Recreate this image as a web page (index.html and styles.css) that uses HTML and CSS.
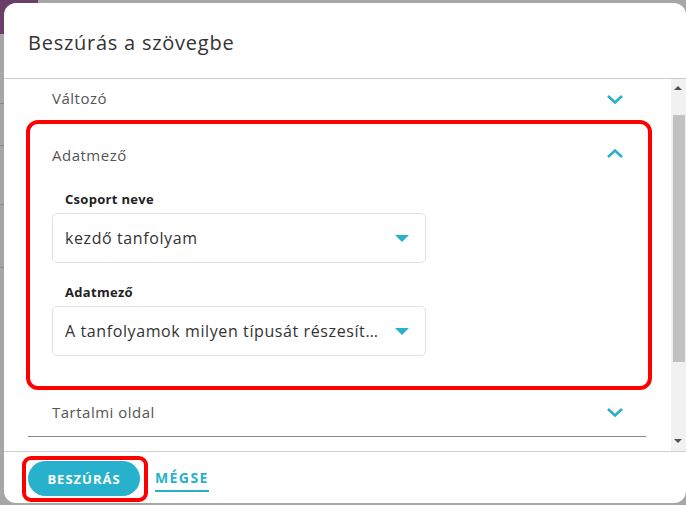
FILE: index.html
```html
<!DOCTYPE html>
<html lang="hu">
<head>
<meta charset="utf-8">
<title>Beszúrás a szövegbe</title>
<link rel="stylesheet" href="styles.css">
</head>
<body>
<div class="backdrop-tab"></div>
<div class="backdrop-lines">
  <span class="bl l1"></span><span class="bl l2"></span><span class="bl l3"></span><span class="bl l4"></span>
</div>
<div class="dialog">
  <div class="dialog-header">Beszúrás a szövegbe</div>
  <div class="dialog-body">
    <div class="scroll-content">
      <div class="acc-item">
        <div class="acc-head first-head">
          <span class="head-text">Változó</span>
          <svg class="chev" width="18" height="11" viewBox="0 0 18 11"><polyline points="2,2 9,8.5 16,2" fill="none" stroke="#2aafcc" stroke-width="2.6"/></svg>
        </div>
      </div>
      <div class="acc-item open highlight">
        <div class="acc-head open-head">
          <span>Adatmező</span>
          <svg class="chev" width="18" height="11" viewBox="0 0 18 11"><polyline points="2,9 9,2.5 16,9" fill="none" stroke="#2aafcc" stroke-width="2.6"/></svg>
        </div>
        <div class="acc-panel">
          <div class="field">
            <div class="field-label">Csoport neve</div>
            <div class="select">
              <span class="select-text">kezdő tanfolyam</span>
              <span class="caret"></span>
            </div>
          </div>
          <div class="field">
            <div class="field-label">Adatmező</div>
            <div class="select">
              <span class="select-text">A tanfolyamok milyen típusát részesítené előnyben?</span>
              <span class="caret"></span>
            </div>
          </div>
        </div>
      </div>
      <div class="acc-item last">
        <div class="acc-head last-head">
          <span>Tartalmi oldal</span>
          <svg class="chev" width="18" height="11" viewBox="0 0 18 11"><polyline points="2,2 9,8.5 16,2" fill="none" stroke="#2aafcc" stroke-width="2.6"/></svg>
        </div>
      </div>
    </div>
    <div class="scrollbar">
      <div class="sb-arrow up"></div>
      <div class="sb-track"><div class="sb-thumb"></div></div>
      <div class="sb-arrow down"></div>
    </div>
  </div>
  <div class="dialog-footer">
    <span class="btn-mark"><button class="btn-primary">Beszúrás</button></span>
    <a class="btn-link">Mégse</a>
  </div>
</div>
</body>
</html>
```

FILE: styles.css
```css
* { box-sizing: border-box; }
html, body { margin: 0; padding: 0; }
body {
  width: 686px;
  height: 505px;
  overflow: hidden;
  background: #a6a6a6;
  font-family: "Open Sans", "Liberation Sans", sans-serif;
  position: relative;
  padding: 3px 0 0 4px;
}
.backdrop-tab {
  position: absolute;
  left: 0; top: 0;
  width: 38px; height: 34px;
  background: #6b3f69;
  border-bottom-right-radius: 10px;
}
.backdrop-lines { position: absolute; left: 0; top: 0; width: 4px; height: 505px; }
.bl { position: absolute; left: 0; width: 4px; height: 1px; background: #8a8a8a; }
.l1 { top: 103px; } .l2 { top: 145px; } .l3 { top: 204px; } .l4 { top: 267px; }
.dialog {
  position: relative;
  width: 682px;
  height: 500px;
  background: #fff;
  border-radius: 12px;
  display: flex;
  flex-direction: column;
  overflow: hidden;
}
.dialog-header {
  height: 76px;
  flex: none;
  border-bottom: 1px solid #cfcbcb;
  padding: 27px 0 0 24px;
  font-size: 20px;
  line-height: 26px;
  color: #333;
  letter-spacing: 0.75px;
}
.dialog-body {
  height: 372px;
  flex: none;
  display: flex;
}
.scroll-content {
  flex: 1;
  min-width: 0;
  padding: 0 25px 0 24px;
}
.acc-head {
  display: flex;
  align-items: center;
  justify-content: space-between;
  font-size: 15px;
  color: #555;
  letter-spacing: 0.5px;
  padding: 0 22px 0 24px;
}
.first-head { height: 41px; }
.first-head .head-text { margin-bottom: 3px; }
.chev { display: block; flex: none; }
.highlight {
  border: 4px solid #fe0000;
  border-radius: 12px;
  margin: 0 -6px 0 -2px;
  padding-bottom: 30px;
}
.open-head { height: 62px; padding: 0 24px 0 22px; }
.open-head .chev { margin-top: -4px; }
.acc-panel { padding: 0 222px 0 22px; }
.field-label {
  font-size: 13px;
  font-weight: 700;
  color: #222;
  letter-spacing: 0.3px;
  height: 16px;
  line-height: 16px;
  margin: 5px 0 6px 13px;
}
.field + .field .field-label { margin-top: 21px; }
.select {
  height: 50px;
  border: 1px solid #e2e2e2;
  border-radius: 5px;
  display: flex;
  align-items: center;
  padding: 0 16px 0 12px;
  gap: 10px;
}
.select-text {
  flex: 1;
  min-width: 0;
  font-size: 16px;
  color: #333;
  letter-spacing: 0.6px;
  white-space: nowrap;
  overflow: hidden;
  text-overflow: ellipsis;
}
.caret {
  flex: none;
  width: 0; height: 0;
  border-left: 7px solid transparent;
  border-right: 7px solid transparent;
  border-top: 7px solid #2aafcc;
}
.last-head {
  height: 47px;
  border-bottom: 1px solid #8c8888;
  padding-bottom: 2px;
}
.scrollbar {
  width: 15px;
  flex: none;
  background: #f1f1f1;
  display: flex;
  flex-direction: column;
}
.sb-arrow { height: 17px; position: relative; }
.sb-arrow.up::after, .sb-arrow.down::after {
  content: "";
  position: absolute;
  left: 3px;
  width: 0; height: 0;
  border-left: 4px solid transparent;
  border-right: 4px solid transparent;
}
.sb-arrow.up::after { top: 7px; border-bottom: 4px solid #505050; }
.sb-arrow.down::after { top: 5px; border-top: 4px solid #505050; }
.sb-track { flex: 1; padding: 19px 1px 0 2px; }
.sb-thumb { height: 247px; background: #c1c1c1; }
.dialog-footer {
  flex: 1;
  border-top: 1px solid #d0d0d0;
  display: flex;
  align-items: flex-start;
  padding: 4px 0 0 18px;
  gap: 7px;
}
.btn-mark {
  display: inline-flex;
  border: 4px solid #fe0000;
  border-radius: 9px;
  padding: 1px 4px 2px 2px;
}
.btn-primary {
  width: 112px;
  height: 35px;
  border: none;
  border-radius: 18px;
  background: #27b1cc;
  color: #fff;
  font-family: inherit;
  font-size: 13px;
  font-weight: 700;
  letter-spacing: 1px;
  text-transform: uppercase;
  padding: 0;
}
.btn-link {
  margin-top: 11px;
  color: #27b1cc;
  font-size: 14px;
  font-weight: 700;
  letter-spacing: 1.4px;
  text-transform: uppercase;
  border-bottom: 2px solid #27b1cc;
  line-height: 21px;
  padding-bottom: 2px;
}
```
